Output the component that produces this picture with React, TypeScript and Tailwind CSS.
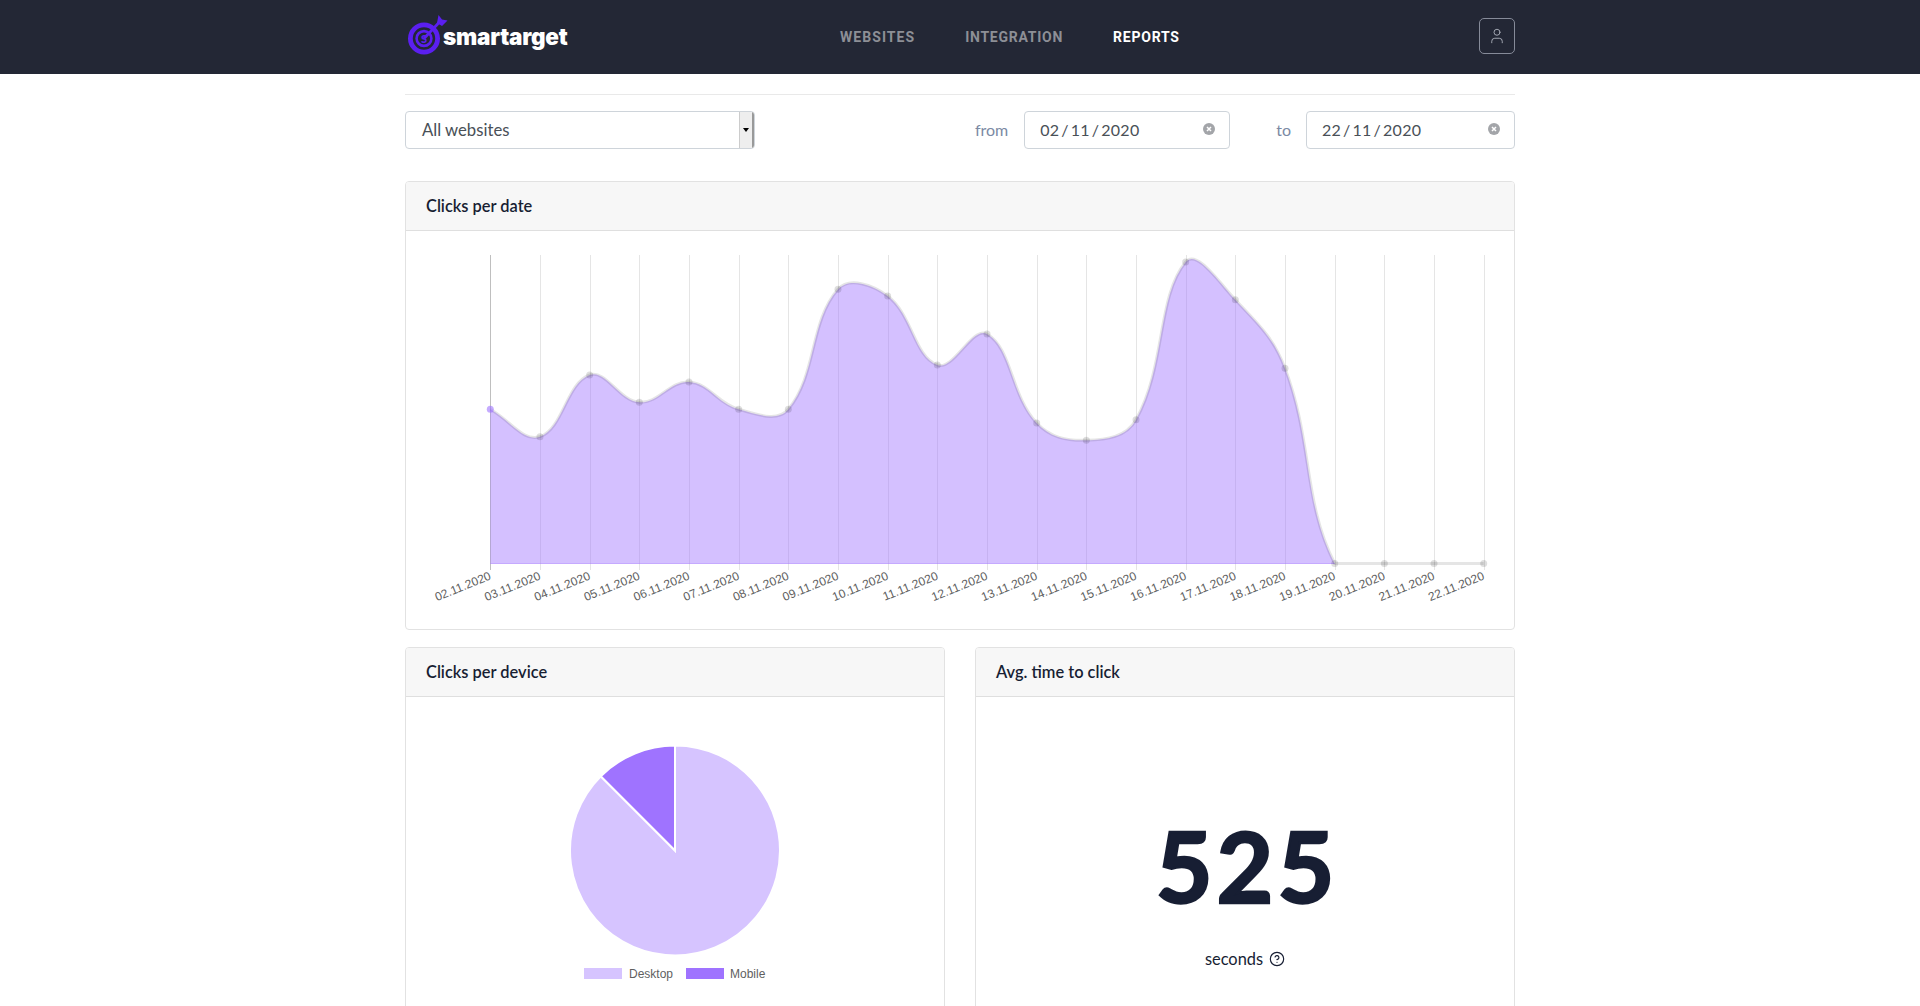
import React from 'react';
import { CircleHelp, User } from 'lucide-react';

const points = [409.3, 436.7, 375, 402.3, 382, 409.3, 409.3, 289.3, 296, 365, 334, 423, 440.3, 419.7, 262, 299.7, 368.3, 563.5, 563.5, 563.5, 563.5];
const dates = ['02', '03', '04', '05', '06', '07', '08', '09', '10', '11', '12', '13', '14', '15', '16', '17', '18', '19', '20', '21', '22'];
const startX = 490.3;
const stepX = 49.67;
const baseY = 563.5;

const pts = points.map((y, i) => ({ x: startX + i * stepX, y }));

// same spline the chart lib uses, tension 0.4
const buildLine = () => {
  const t = 0.4;
  const controls = pts.map((p, i) => {
    const prev = pts[i - 1] || p;
    const next = pts[i + 1] || p;
    const d01 = Math.hypot(p.x - prev.x, p.y - prev.y);
    const d12 = Math.hypot(next.x - p.x, next.y - p.y);
    const total = d01 + d12 || 1;
    const fa = (t * d01) / total;
    const fb = (t * d12) / total;
    return {
      px: p.x - fa * (next.x - prev.x),
      py: p.y - fa * (next.y - prev.y),
      nx: p.x + fb * (next.x - prev.x),
      ny: p.y + fb * (next.y - prev.y),
    };
  });
  let d = `M${pts[0].x} ${pts[0].y}`;
  for (let i = 1; i < pts.length; i++) {
    const a = controls[i - 1];
    const b = controls[i];
    d += ` C${a.nx} ${Math.min(a.ny, baseY)} ${b.px} ${Math.min(b.py, baseY)} ${pts[i].x} ${pts[i].y}`;
  }
  return d;
};

const linePath = buildLine();
const areaPath = `${linePath} L${pts[0].x} ${baseY} Z`;

const Card = ({ title, className, children }: { title: string; className: string; children: React.ReactNode }) => (
  <div className={`border border-[#e2e2e2] rounded bg-white overflow-hidden ${className}`}>
    <div className="h-[49px] bg-[#f7f7f7] border-b border-[#dfdfdf] pl-[20px] pt-[1px] flex items-center text-[16.4px] font-semibold text-[#171e33]">
      {title}
    </div>
    {children}
  </div>
);

const ClearIcon = () => (
  <svg width="12" height="12" viewBox="0 0 12 12" className="absolute right-[14px] top-[11px]">
    <circle cx="6" cy="6" r="6" fill="#a3a5a9" />
    <path d="M4 4 L8 8 M8 4 L4 8" stroke="#fff" strokeWidth="1.5" />
  </svg>
);

const DateInput = ({ value, className }: { value: string; className: string }) => (
  <div className={`relative h-[38px] border border-[#ced4da] rounded bg-white pl-[15px] flex items-center text-[16px] tracking-[0.25px] text-[#495057] ${className}`}>
    {value.split('/').map((part, i) => (
      <React.Fragment key={i}>
        {i > 0 && <span className="mx-[2px]">/</span>}
        <span>{part}</span>
      </React.Fragment>
    ))}
    <ClearIcon />
  </div>
);

const Logo = () => (
  <div className="w-[170px] flex items-center">
    <svg width="44" height="44" viewBox="405 14 44 44" className="shrink-0">
      <circle cx="424" cy="37.5" r="13.6" fill="none" stroke="#5b1ff0" strokeWidth="4.8" />
      <circle cx="424" cy="37.5" r="7.4" fill="none" stroke="#5b1ff0" strokeWidth="2.6" />
      <path d="M424 37.5 L440 20.5" stroke="#5b1ff0" strokeWidth="2.8" />
      <path d="M437 22 L438.5 14 L442 18.5 L447.5 19.5 L442 25 Z" fill="#5b1ff0" />
      <text x="424" y="41.5" textAnchor="middle" fontFamily="Lato, sans-serif" fontWeight="900" fontSize="11" fill="#5b1ff0">S</text>
    </svg>
    <span className="-ml-[6px] font-['Inter',sans-serif] font-black text-[22.5px] tracking-[-0.25px] leading-none text-white">smartarget</span>
  </div>
);

const App: React.FC = () => {
  const sx = 675 - 105 * Math.SQRT1_2;
  const sy = 850.5 - 105 * Math.SQRT1_2;

  return (
    <div className="h-[1006px] overflow-hidden bg-white font-['Lato','Noto_Sans',sans-serif]">
      <nav className="h-[74px] bg-[#232735]">
        <div className="w-[1110px] mx-auto h-full flex items-center">
          <Logo />
          <ul className="ml-[265px] flex gap-[50px] font-['Roboto',sans-serif] font-bold text-[14px]">
            <li className="text-[#8d8f96] tracking-[1.05px]">WEBSITES</li>
            <li className="text-[#8d8f96] tracking-[0.75px]">INTEGRATION</li>
            <li className="text-white tracking-[0.75px]">REPORTS</li>
          </ul>
          <button className="ml-auto mb-[2px] w-[36px] h-[36px] border border-[#868b99] rounded-[5px] flex items-center justify-center">
            <User size={18} strokeWidth={1.25} color="#a9adb8" />
          </button>
        </div>
      </nav>

      <main className="w-[1110px] mx-auto pt-[20px]">
        <hr className="border-t border-[#e9e9e9]" />

        <div className="mt-[16px] flex items-center h-[38px]">
          <div className="w-[350px] h-[38px] border border-[#ced4da] rounded bg-white flex items-center justify-between overflow-hidden">
            <span className="pl-[16px] pt-[1px] text-[16.7px] text-[#495057]">All websites</span>
            <div className="w-[15px] h-full bg-[#eeeeee] border-r-[2px] border-r-[#999] border-l border-l-[#ccc] flex items-center justify-center">
              <span className="w-0 h-0 border-x-[3px] border-x-transparent border-t-[4px] border-t-black" />
            </div>
          </div>
          <span className="ml-auto text-[16px] text-[#7b8aa4]">from</span>
          <DateInput value="02/11/2020" className="ml-[16px] w-[206px]" />
          <span className="ml-[46px] text-[16px] text-[#7b8aa4]">to</span>
          <DateInput value="22/11/2020" className="ml-[15px] w-[209px]" />
        </div>

        <Card title="Clicks per date" className="mt-[32px] h-[449px]">
          <svg width="1108" height="398" viewBox="406 231 1108 398" className="block">
            {pts.map((p, i) => (
              <line key={i} x1={Math.round(p.x) + 0.5} x2={Math.round(p.x) + 0.5} y1="255" y2="570" stroke={i === 0 ? 'rgba(0,0,0,0.25)' : 'rgba(0,0,0,0.1)'} />
            ))}
            <path d={areaPath} fill="rgba(159,115,255,0.45)" />
            <line x1={startX} x2={pts[17].x} y1={baseY} y2={baseY} stroke="rgba(159,115,255,0.5)" />
            <path d={linePath} fill="none" stroke="rgba(0,0,0,0.1)" strokeWidth="3" />
            {pts.map((p, i) => (
              <circle key={i} cx={p.x} cy={p.y} r="3.5" fill={i === 0 ? 'rgba(159,115,255,0.6)' : 'rgba(0,0,0,0.13)'} />
            ))}
            {pts.map((p, i) => (
              <text
                key={i}
                x={p.x + 1.5}
                y={579}
                textAnchor="end"
                transform={`rotate(-22 ${p.x + 1.5} 579)`}
                fontFamily="'Liberation Sans', Arial, sans-serif"
                fontSize="12"
                fill="#5f5f5f"
              >
                {dates[i]}.11.2020
              </text>
            ))}
          </svg>
        </Card>

        <div className="mt-[17px] grid grid-cols-2 gap-[30px]">
          <Card title="Clicks per device" className="h-[420px]">
            <svg width="538" height="300" viewBox="406 697 538 300" className="block">
              <path d={`M675 850.5 L675 745.5 A105 105 0 1 1 ${sx} ${sy} Z`} fill="#d6c4ff" stroke="#fff" strokeWidth="2" />
              <path d={`M675 850.5 L${sx} ${sy} A105 105 0 0 1 675 745.5 Z`} fill="#9f73ff" stroke="#fff" strokeWidth="2" />
              <rect x="584" y="968" width="38" height="11" fill="#d6c4ff" />
              <text x="629" y="977.5" fontFamily="'Liberation Sans', Arial, sans-serif" fontSize="12" fill="#5f5f5f">Desktop</text>
              <rect x="686" y="968" width="38" height="11" fill="#9f73ff" />
              <text x="730" y="977.5" fontFamily="'Liberation Sans', Arial, sans-serif" fontSize="12" fill="#5f5f5f">Mobile</text>
            </svg>
          </Card>

          <Card title="Avg. time to click" className="h-[420px]">
            <div className="flex flex-col items-center pt-[108px] text-[#171e33]">
              <div className="pl-[4px] text-[98px] tracking-[4px] leading-[120px] font-bold [-webkit-text-stroke:2.5px_#171e33]">525</div>
              <div className="mt-[22px] flex items-center gap-[6px] text-[16.4px]">
                seconds
                <CircleHelp size={16} strokeWidth={1.75} />
              </div>
            </div>
          </Card>
        </div>
      </main>
    </div>
  );
};

export default App;
